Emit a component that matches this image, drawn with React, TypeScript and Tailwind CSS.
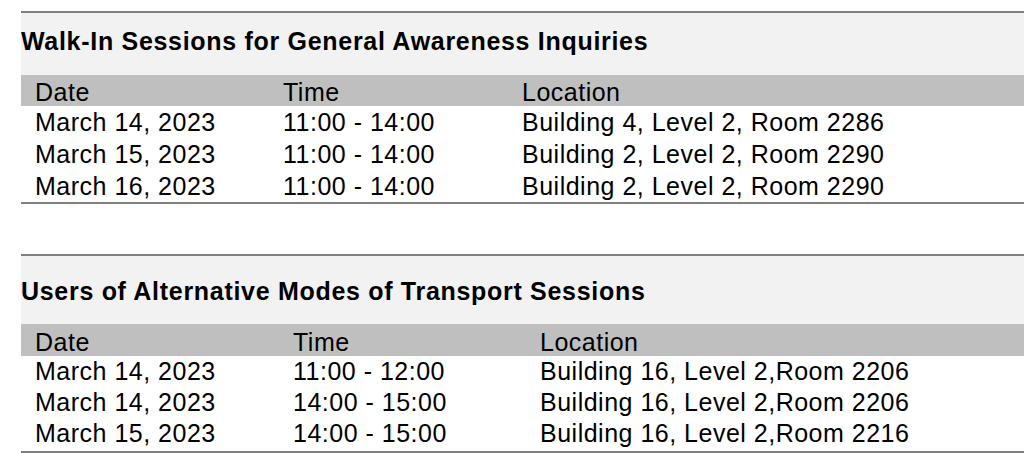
const walkIn = [
  ["March 14, 2023", "11:00 - 14:00", "Building 4, Level 2, Room 2286"],
  ["March 15, 2023", "11:00 - 14:00", "Building 2, Level 2, Room 2290"],
  ["March 16, 2023", "11:00 - 14:00", "Building 2, Level 2, Room 2290"],
];

const transport = [
  ["March 14, 2023", "11:00 - 12:00", "Building 16, Level 2,Room 2206"],
  ["March 14, 2023", "14:00 - 15:00", "Building 16, Level 2,Room 2206"],
  ["March 15, 2023", "14:00 - 15:00", "Building 16, Level 2,Room 2216"],
];

export default function App() {
  return (
    <div className="w-[1024px] h-[454px] overflow-hidden bg-white pt-[11px] pl-[21px] text-black font-['Liberation_Sans',Arial,sans-serif]">
      {/* Walk-in sessions */}
      <section className="border-t-2 border-b-2 border-[#808080]">
        <div className="h-[62px] bg-[#f2f2f2] pt-[14px]">
          <h2 className="text-[25px] leading-[28px] font-bold tracking-[0.7px]">
            Walk-In Sessions for General Awareness Inquiries
          </h2>
        </div>
        <div className="grid grid-cols-[248px_239px_1fr] h-[31px] pt-[2px] pl-[14px] bg-[#bfbfbf] text-[25px] leading-[31px] tracking-[0.5px]">
          <span>Date</span>
          <span>Time</span>
          <span>Location</span>
        </div>
        {walkIn.map((r, i) => (
          <div key={i} className="grid grid-cols-[248px_239px_1fr] h-[32px] pl-[14px] text-[25px] leading-[32px] tracking-[0.5px]">
            <span>{r[0]}</span>
            <span>{r[1]}</span>
            <span>{r[2]}</span>
          </div>
        ))}
      </section>

      {/* Alternative transport sessions */}
      <section className="mt-[50px] border-t-2 border-b-2 border-[#808080] pb-[2px]">
        <div className="h-[68px] bg-[#f2f2f2] pt-[21px]">
          <h2 className="text-[25px] leading-[28px] font-bold tracking-[0.7px]">
            Users of Alternative Modes of Transport Sessions
          </h2>
        </div>
        <div className="grid grid-cols-[258px_247px_1fr] h-[32px] pt-[3px] pl-[14px] bg-[#bfbfbf] text-[25px] leading-[31px] tracking-[0.5px]">
          <span>Date</span>
          <span>Time</span>
          <span>Location</span>
        </div>
        {transport.map((r, i) => (
          <div key={i} className="grid grid-cols-[258px_247px_1fr] h-[31px] pl-[14px] text-[25px] leading-[31px] tracking-[0.5px]">
            <span>{r[0]}</span>
            <span>{r[1]}</span>
            <span>{r[2]}</span>
          </div>
        ))}
      </section>
    </div>
  );
}
